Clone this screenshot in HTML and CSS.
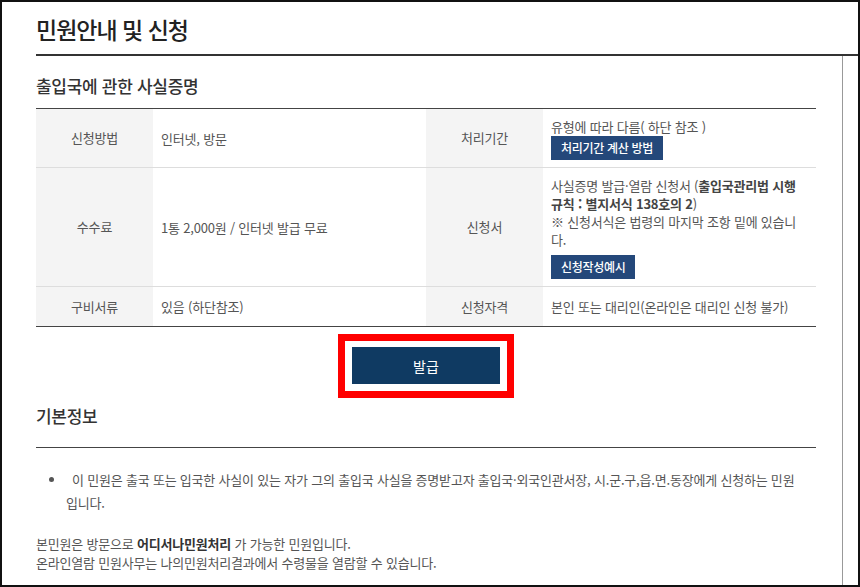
FILE: index.html
```html
<!DOCTYPE html>
<html lang="ko">
<head>
<meta charset="UTF-8" />
<meta name="viewport" content="width=device-width, initial-scale=1" />
<title>민원안내 및 신청</title>
<link rel="stylesheet" href="styles.css">
</head>
<body>

<div class="frame">
  <header class="page-head">
    <h1>민원안내 및 신청</h1>
  </header>

  <main class="page-body">
    <h2 class="sec-title">출입국에 관한 사실증명</h2>

    <table class="info-table">
      <colgroup>
        <col class="c-label"><col class="c-value"><col class="c-label"><col class="c-value">
      </colgroup>
      <tr>
        <th>신청방법</th>
        <td>인터넷, 방문</td>
        <th>처리기간</th>
        <td>
          유형에 따라 다름( 하단 참조 )
          <a class="cell-btn">처리기간 계산 방법</a>
        </td>
      </tr>
      <tr>
        <th>수수료</th>
        <td>1통 2,000원 / 인터넷 발급 무료</td>
        <th>신청서</th>
        <td>
          사실증명 발급·열람 신청서 (<b>출입국관리법 시행<br>규칙 : 별지서식 138호의 2</b>)<br>
          ※ 신청서식은 법령의 마지막 조항 밑에 있습니<br>다.
          <a class="cell-btn gap">신청작성예시</a>
        </td>
      </tr>
      <tr class="row-last">
        <th>구비서류</th>
        <td>있음 (하단참조)</td>
        <th>신청자격</th>
        <td>본인 또는 대리인(온라인은 대리인 신청 불가)</td>
      </tr>
    </table>

    <div class="issue-wrap">
      <div class="issue-box">
        <button class="issue-btn">발급</button>
      </div>
    </div>

    <h2 class="sec-title basic">기본정보</h2>

    <ul class="basic-list">
      <li>이 민원은 출국 또는 입국한 사실이 있는 자가 그의 출입국 사실을 증명받고자 출입국·외국인관서장, 시.군.구,읍.면.동장에게 신청하는 민원<br>입니다.</li>
    </ul>

    <p class="basic-note">
      본민원은 방문으로 <b>어디서나민원처리</b> 가 가능한 민원입니다.<br>
      온라인열람 민원사무는 나의민원처리결과에서 수령물을 열람할 수 있습니다.
    </p>
  </main>
</div>

</body>
</html>
```

FILE: styles.css
```css
html, body { margin: 0; padding: 0; background: #fff; }
body { font-family: "Noto Sans CJK KR", "Noto Sans", sans-serif; color: #555; }

.frame {
  width: 860px; height: 587px; box-sizing: border-box; border: 2px solid #111;
  overflow: hidden; display: flex; flex-direction: column;
}

.page-head { margin-left: 34px; padding: 12px 0 10px; border-bottom: 2px solid #333; }
.page-head h1 {
  margin: 0; font-size: 23px; line-height: 30px; font-weight: 500;
  letter-spacing: -1px; color: #222;
}

.page-body {
  flex: 1; margin-left: 34px; width: 807px; box-sizing: border-box;
  padding-right: 26px; border-right: 1px solid #999;
}

.sec-title {
  margin: 0; padding: 18px 0 10px; font-size: 17px; line-height: 24px;
  font-weight: 500; color: #333; letter-spacing: -0.3px;
}
.sec-title.basic { margin-top: 6px; padding: 0 0 19px; border-bottom: 1px solid #444; }

/* table */
.info-table {
  width: 100%; table-layout: fixed; border-collapse: collapse;
  border-top: 1px solid #444; border-bottom: 1px solid #444;
  font-size: 13px; line-height: 18px; letter-spacing: -0.2px;
}
.info-table .c-label { width: 117px; }
.info-table th, .info-table td { border-bottom: 1px solid #ddd; vertical-align: middle; }
.info-table th { background: #f4f4f4; font-weight: 400; color: #555; text-align: center; }
.info-table td { text-align: left; padding: 9px 8px 7px; color: #555; white-space: nowrap; }
.info-table td b { color: #444; }
.info-table .row-last td { padding: 11px 8px 10px; }
.info-table .row-last th, .info-table .row-last td { border-bottom: none; }

.cell-btn {
  display: block; width: fit-content; height: 24px; line-height: 24px; padding: 0 10px;
  background: #24487a; color: #fff; font-size: 12px; font-weight: 500; letter-spacing: -0.3px;
}
.cell-btn.gap { margin-top: 6px; }

/* issue button */
.issue-wrap { text-align: center; margin-top: 7px; line-height: 0; }
.issue-box { display: inline-block; border: 7px solid #f00; padding: 6px 7px 7px; }
.issue-btn {
  width: 148px; height: 37px; border: none; background: #0f3a62; color: #fff;
  font-family: inherit; font-size: 14px; cursor: pointer;
}

/* basic info */
.basic-list {
  margin: 0; padding: 20px 0 0 30px; font-size: 13px; line-height: 23px;
  letter-spacing: -0.2px; color: #555;
}
.basic-list li { text-indent: 6px; }
.basic-note {
  margin: 20px 0 0; font-size: 13px; line-height: 19px; letter-spacing: -0.2px; color: #555;
}
.basic-note b { color: #333; }
```
